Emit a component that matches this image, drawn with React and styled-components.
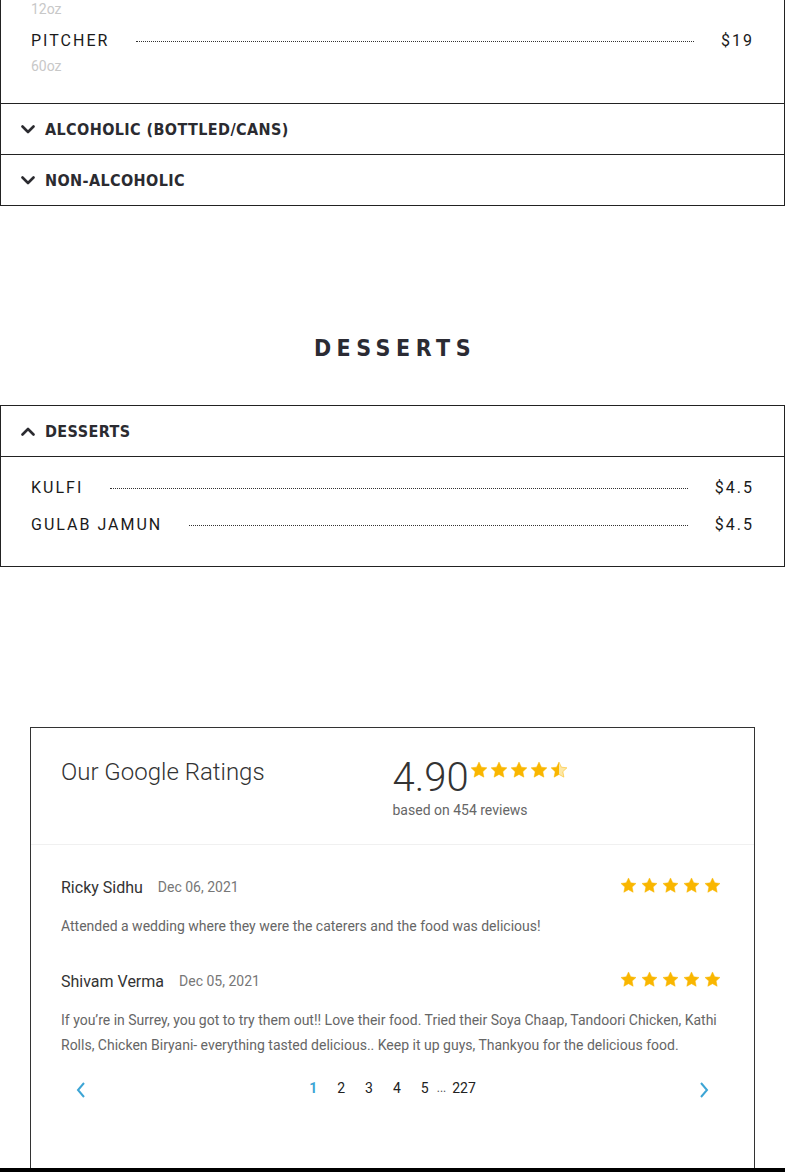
import React from 'react';
import styled, { createGlobalStyle } from 'styled-components';

const GlobalStyle = createGlobalStyle`
  body {
    margin: 0;
    background: #ffffff;
    font-family: Roboto, "Liberation Sans", sans-serif;
    color: #222222;
  }
`;

const Page = styled.div`
  width: 785px;
  overflow: hidden;
`;

const Panel = styled.div`
  border: 1px solid #222222;
  border-top: ${(p) => (p.$noTop ? 'none' : '1px solid #222222')};
  & + & {
    border-top: none;
  }
`;

const PanelHeader = styled.div`
  height: 50px;
  display: flex;
  align-items: center;
  gap: 10px;
  padding-left: 20px;
  font-family: "DejaVu Sans", sans-serif;
  font-stretch: condensed;
  font-weight: 700;
  font-size: 16px;
  letter-spacing: 0.4px;
  color: #2b2b30;
  text-transform: uppercase;
`;

const PanelBody = styled.div`
  display: flex;
  flex-direction: column;
  gap: ${(p) => p.$gap || 13}px;
  padding: ${(p) => p.$pad || '18px 30px 30px'};
  border-top: ${(p) => (p.$divided ? '1px solid #222222' : 'none')};
`;

const Item = styled.div`
  display: flex;
  flex-direction: column;
`;

const ItemRow = styled.div`
  display: flex;
  align-items: center;
  height: 24px;
  font-size: 16px;
  font-weight: 400;
  letter-spacing: 2px;
  color: #1a1a1a;
  text-transform: uppercase;
`;

const Dots = styled.span`
  flex: 1;
  margin: 2px 27px 0;
  border-bottom: 1px dotted #333333;
`;

const Sub = styled.div`
  font-size: 14px;
  line-height: ${(p) => p.$lh || 20}px;
  color: #c8c8c8;
  margin-top: ${(p) => p.$mt || 0}px;
`;

const SectionTitle = styled.h2`
  margin: 127px 0 42px;
  text-align: center;
  font-family: "DejaVu Sans", sans-serif;
  font-stretch: condensed;
  font-weight: 700;
  font-size: 23px;
  line-height: 30px;
  letter-spacing: 5.5px;
  padding-left: 5px;
  color: #2b2b33;
`;

const Card = styled.div`
  margin: 160px 30px 0;
  border: 1px solid #333333;
  border-bottom: none;
  padding-bottom: 68px;
`;

const CardHead = styled.div`
  display: grid;
  grid-template-columns: 1fr 1fr;
  padding: 30px 30px 24px;
  border-bottom: 1px solid #f0f0f0;
`;

const CardTitle = styled.div`
  font-size: 24px;
  font-weight: 300;
  line-height: 28px;
  color: #333333;
`;

const ScoreRow = styled.div`
  display: flex;
  align-items: flex-start;
`;

const Score = styled.div`
  font-size: 40px;
  font-weight: 300;
  line-height: 40px;
  color: #333333;
`;

const Based = styled.div`
  margin-top: 2px;
  font-size: 14px;
  line-height: 20px;
  color: #666666;
`;

const StarRow = styled.div`
  display: flex;
  gap: ${(p) => p.$gap}px;
  margin-top: ${(p) => p.$mt || 0}px;
`;

const Reviews = styled.div`
  padding: 30px 30px 0;
  display: flex;
  flex-direction: column;
  gap: 30px;
`;

const Review = styled.div`
  display: flex;
  flex-direction: column;
  gap: 15px;
`;

const ReviewHead = styled.div`
  display: flex;
  align-items: center;
  height: 24px;
  padding-right: 2px;
`;

const Name = styled.span`
  font-size: 16px;
  color: #333333;
`;

const Date = styled.span`
  margin-left: 15px;
  font-size: 14px;
  color: #777777;
  flex: 1;
`;

const ReviewText = styled.p`
  margin: 0;
  font-size: 14px;
  line-height: 25px;
  color: #666666;
`;

const Pager = styled.div`
  display: flex;
  align-items: center;
  justify-content: space-between;
  margin: 18px 30px 0;
  height: 24px;
`;

const Arrow = styled.div`
  width: 40px;
  display: flex;
  justify-content: center;
  padding-top: 4px;
  color: #3da5d5;
`;

const Pages = styled.div`
  display: flex;
  align-items: center;
  gap: 20px;
  font-size: 14px;
  color: #222222;
`;

const PageNum = styled.span`
  color: ${(p) => (p.$active ? '#3da5d5' : '#222222')};
  font-weight: ${(p) => (p.$active ? 700 : 400)};
`;

const Ellipsis = styled.span`
  margin: 0 -14px 0 -12px;
  font-size: 12px;
  color: #555555;
`;

const Footer = styled.div`
  height: 120px;
  background: #000000;
`;

const Chevron = ({ up }) => (
  <svg width="14" height="9" viewBox="0 0 14 9">
    <polyline
      points={up ? '1.5,7.5 7,2 12.5,7.5' : '1.5,1.5 7,7 12.5,1.5'}
      fill="none"
      stroke="#2b2b30"
      strokeWidth="2.6"
      strokeLinecap="round"
      strokeLinejoin="round"
    />
  </svg>
);

const STAR = 'M12 2.5l2.9 6.1 6.6.8-4.9 4.6 1.3 6.6L12 17.3l-5.9 3.3 1.3-6.6-4.9-4.6 6.6-.8z';

const Star = ({ size, half }) => (
  <svg width={size} height={size} viewBox="0 0 24 24">
    {half && (
      <defs>
        <linearGradient id="halfStar">
          <stop offset="50%" stopColor="#f9b600" />
          <stop offset="50%" stopColor="#fde7a6" />
        </linearGradient>
      </defs>
    )}
    <path d={STAR} fill={half ? 'url(#halfStar)' : '#f9b600'} stroke="#f9b600" strokeWidth="0.6" />
  </svg>
);

const Stars = ({ size, gap, half, mt }) => (
  <StarRow $gap={gap} $mt={mt}>
    {[0, 1, 2, 3, 4].map((i) => (
      <Star key={i} size={size} half={half && i === 4} />
    ))}
  </StarRow>
);

const MenuItem = ({ name, price, sub }) => (
  <Item>
    <ItemRow>
      <span>{name}</span>
      <Dots />
      <span>{price}</span>
    </ItemRow>
    {sub && <Sub $mt={4}>{sub}</Sub>}
  </Item>
);

const reviews = [
  {
    name: 'Ricky Sidhu',
    date: 'Dec 06, 2021',
    text: 'Attended a wedding where they were the caterers and the food was delicious!',
  },
  {
    name: 'Shivam Verma',
    date: 'Dec 05, 2021',
    text: 'If you’re in Surrey, you got to try them out!! Love their food. Tried their Soya Chaap, Tandoori Chicken, Kathi Rolls, Chicken Biryani- everything tasted delicious.. Keep it up guys, Thankyou for the delicious food.',
  },
];

function App() {
  return (
    <Page>
      <GlobalStyle />

      <div>
        <Panel $noTop>
          <PanelBody $gap={10} $pad="0 30px 27px">
            <Sub $lh={18}>12oz</Sub>
            <MenuItem name="Pitcher" price="$19" sub="60oz" />
          </PanelBody>
        </Panel>
        <Panel>
          <PanelHeader>
            <Chevron />
            Alcoholic (Bottled/Cans)
          </PanelHeader>
        </Panel>
        <Panel>
          <PanelHeader>
            <Chevron />
            Non-Alcoholic
          </PanelHeader>
        </Panel>
      </div>

      <SectionTitle>DESSERTS</SectionTitle>

      <Panel>
        <PanelHeader>
          <Chevron up />
          Desserts
        </PanelHeader>
        <PanelBody $divided>
          <MenuItem name="Kulfi" price="$4.5" />
          <MenuItem name="Gulab Jamun" price="$4.5" />
        </PanelBody>
      </Panel>

      <Card>
        <CardHead>
          <CardTitle>Our Google Ratings</CardTitle>
          <div>
            <ScoreRow>
              <Score>4.90</Score>
              <Stars size={20} gap={0} half mt={2} />
            </ScoreRow>
            <Based>based on 454 reviews</Based>
          </div>
        </CardHead>

        <Reviews>
          {reviews.map((r) => (
            <Review key={r.name}>
              <ReviewHead>
                <Name>{r.name}</Name>
                <Date>{r.date}</Date>
                <Stars size={19} gap={2} mt={-4} />
              </ReviewHead>
              <ReviewText>{r.text}</ReviewText>
            </Review>
          ))}
        </Reviews>

        <Pager>
          <Arrow>
            <svg width="10" height="18" viewBox="0 0 10 18">
              <polyline points="8,2 2,9 8,16" fill="none" stroke="currentColor" strokeWidth="2" />
            </svg>
          </Arrow>
          <Pages>
            <PageNum $active>1</PageNum>
            <PageNum>2</PageNum>
            <PageNum>3</PageNum>
            <PageNum>4</PageNum>
            <PageNum>5</PageNum>
            <Ellipsis>...</Ellipsis>
            <PageNum>227</PageNum>
          </Pages>
          <Arrow>
            <svg width="10" height="18" viewBox="0 0 10 18">
              <polyline points="2,2 8,9 2,16" fill="none" stroke="currentColor" strokeWidth="2" />
            </svg>
          </Arrow>
        </Pager>
      </Card>

      <Footer />
    </Page>
  );
}

export default App;
